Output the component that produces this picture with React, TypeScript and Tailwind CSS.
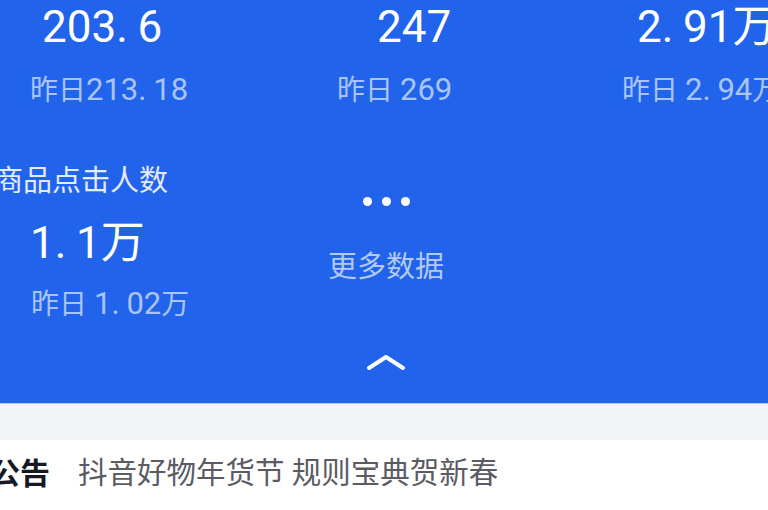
const font = { fontFamily: '"Roboto", "Noto Sans CJK SC", sans-serif' };

// the dot in these numbers is set with a little air after it, as in the app
function Num({ value, className }: { value: string; className?: string }) {
  const [head, tail] = value.split('.');
  return (
    <span className={className}>
      {head}
      {tail !== undefined && (
        <>
          <span className="mr-[0.22em]">.</span>
          {tail}
        </>
      )}
    </span>
  );
}

const sub = 'mt-[19px] text-[28px] leading-[36px] text-[#a9c4f7] whitespace-nowrap';
const subNum = 'text-[31px] leading-[36px]';

export default function App() {
  return (
    <div className="w-[768px] h-[510px] overflow-hidden bg-white" style={font}>
      <section className="bg-[#2163eb] text-white pt-[1px] pb-[32px]">
        {/* row 1 (labels are above the visible area) */}
        <div className="grid grid-cols-[300px_280px_1fr]">
          <div className="flex flex-col">
            <div className="pl-[42px] text-[44px] leading-[52px] whitespace-nowrap">
              <Num value="203.6" />
            </div>
            <div className={`pl-[30px] ${sub}`}>
              昨日<Num value="213.18" className={subNum} />
            </div>
          </div>
          <div className="flex flex-col">
            <div className="pl-[77px] text-[44px] leading-[52px] whitespace-nowrap">247</div>
            <div className={`pl-[37px] ${sub}`}>
              昨日 <Num value="269" className={subNum} />
            </div>
          </div>
          <div className="flex flex-col">
            <div className="pl-[57px] text-[44px] leading-[52px] whitespace-nowrap">
              <Num value="2.91" />万
            </div>
            <div className={`pl-[42px] ${sub}`}>
              昨日 <Num value="2.94" className={subNum} />万
            </div>
          </div>
        </div>

        {/* row 2 */}
        <div className="grid grid-cols-[300px_280px_1fr] mt-[54px]">
          <div className="flex flex-col">
            <div className="ml-[-6px] text-[29px] leading-[36px] text-[#e4ebfc] whitespace-nowrap">
              商品点击人数
            </div>
            <div className="pl-[30px] mt-[18px] text-[44px] leading-[52px] whitespace-nowrap">
              <Num value="1.1" />万
            </div>
            <div className={`pl-[31px] ${sub} !mt-[17px]`}>
              昨日 <Num value="1.02" className={subNum} />万
            </div>
          </div>
          <div className="flex flex-col items-center w-[120px] ml-[26px]">
            <div className="flex gap-[10px] mt-[34px]">
              <span className="w-[9px] h-[9px] rounded-full bg-white" />
              <span className="w-[9px] h-[9px] rounded-full bg-white" />
              <span className="w-[9px] h-[9px] rounded-full bg-white" />
            </div>
            <div className="mt-[43px] text-[29px] leading-[36px] text-[#b3caf6] whitespace-nowrap">
              更多数据
            </div>
          </div>
          <div />
        </div>

        <div className="flex justify-center mt-[30px] pl-[4px]">
          <svg width="40" height="18" viewBox="0 0 40 18" fill="none">
            <path
              d="M3 15 L20 4 L37 15"
              stroke="#ffffff"
              strokeWidth="4"
              strokeLinecap="round"
              strokeLinejoin="round"
            />
          </svg>
        </div>
      </section>

      <div className="h-[37px] bg-[#f3f4f8] border-t border-[#a8c6f6]" />

      <div className="flex items-center h-[66px] whitespace-nowrap">
        <span className="ml-[-10px] text-[30px] font-bold text-[#161823]">公告</span>
        <span className="ml-[28px] text-[29.5px] text-[#5b5b63]">抖音好物年货节 规则宝典贺新春</span>
      </div>
    </div>
  );
}
